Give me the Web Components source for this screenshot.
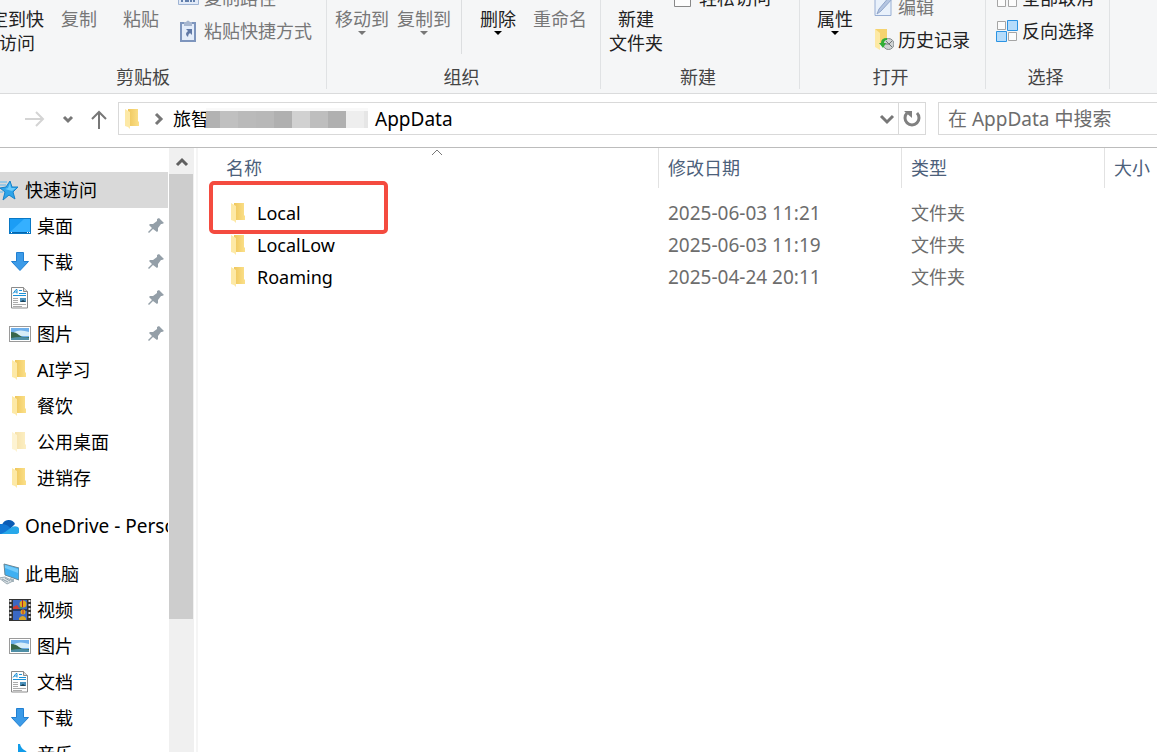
<!DOCTYPE html>
<html lang="zh-CN">
<head>
<meta charset="utf-8">
<meta name="viewport" content="width=device-width, initial-scale=1">
<title>AppData</title>
<style>
  html, body { margin: 0; height: 100%; overflow: hidden; background: #fff; }
  body { font: 18px/24px "Noto Sans", "Noto Sans CJK SC", sans-serif; color: #000; }
</style>
</head>
<body>
<explorer-window></explorer-window>

<script>
const ICONS = {
  folder: `<linearGradient id="g"><stop offset="0" stop-color="#efc75c"/><stop offset="1" stop-color="#fbe08a"/></linearGradient><path d="M6 1h10v12l1 1v4H6z" fill="url(#g)"/><path d="M3 1l5 3v17l-2-2-3-1z" fill="#fde9a6"/>`,
  star: `<path d="M13 2l2 6 6 0-5 5 2 7-6-4-6 5 2-8-5-4 6-1z" fill="#2ea5ea" stroke="#1581c9"/><path d="M13 4l1 5 5 0-4 3-7-2 3-1z" fill="#6ccbfa"/><path d="M3 3h7M3 6h6M3 13h3" stroke="#5db9ee"/>`,
  desktop: `<rect x=".5" y="3.500" width="21" height="15" fill="#1b9df5" stroke="#0a78c4"/><path d="M1 17L15 4h6v13z" fill="#35b0ff"/><path d="M1 17.500h20" stroke="#0565ad"/><path d="M2 17.500h1M18 17.500h1M20 17.500h1" stroke="#fff"/>`,
  download: `<path d="M7.500 1.500h7v9h5l-8.500 9-8.500-9h5z" fill="#3c9be8" stroke="#2180d2"/>`,
  doc: `<path d="M2.500.5h12l4 4v16.500h-16z" fill="#fdfdfd" stroke="#8b8b8b"/><path d="M14.500.5v4h4" fill="#ddd" stroke="#8b8b8b"/><path d="M4 6.500l3-4h1v4M5 5h3M10 3.500h3M10 6.500h7M4 8.500h13" stroke="#1a91d8" fill="none"/><path d="M4 11.500h5M4 13.500h5M4 15.500h5M4 17.500h13M4 19.500h9" stroke="#aaa"/><path d="M11 11h6v4h-6z" fill="#4c92bd"/><path d="M11 15l3-2 3 2z" fill="#1b4056"/>`,
  picture: `<rect x=".5" y="3.500" width="21" height="15" fill="#fff" stroke="#9a9a9a"/><path d="M2 5h18v12H2z" fill="#6fb0ec"/><path d="M5 9q6-3 15 0v4H5z" fill="#d7edf8"/><path d="M2 9q5 0 8 3t10 2v1H2z" fill="#38664a"/><path d="M2 15q9-2 18 0v2H2z" fill="#4f8fa6"/>`,
  cloud: `<path d="M5 10a7 7 0 0 1 13-1l-6 6z" fill="#0a5bb5"/><path d="M3 19a5 5 0 0 1 1-10q6-1 11 6l-6 4z" fill="#1277d4"/><path d="M4 19l4-2 7-5a6 6 0 0 1 6 0q4 5-1 7z" fill="#28a8ea"/>`,
  computer: `<path d="M7 1l15 4v12L8 12z" fill="#3fb0f2" stroke="#6a8794"/><path d="M8 2l13 4v4L8 5z" fill="#72cbfb"/><path d="M13 15l4 1v3h-5z" fill="#a8b8c0"/><path d="M2 15l6-1 8 4-6 3z" fill="#dce3e7" stroke="#9cabb3"/><path d="M5 16l6 3M8 15l5 3" stroke="#8fa0aa"/>`,
  video: `<path d="M0 0h22v22H0z" fill="#333"/><path d="M4 1h14v20H4z" fill="#3a68c4"/><path d="M4 11h14" stroke="#111"/><path d="M1.500 1v20M20.500 1v20" stroke="#ddd" stroke-width="2" stroke-dasharray="2 2"/><circle cx="14" cy="5" r="3.500" fill="#e0a91d"/><path d="M13.500 1v7" stroke="#b5222b"/><path d="M4 8l4-2 3 4H4z" fill="#ce3c35"/><path d="M9 8h5l-2 2z" fill="#44984d"/><circle cx="14" cy="13" r="2.500" fill="#dea51d"/><path d="M14 11v4" stroke="#c12c2c"/><path d="M10 19q4-4 7 0v2h-7z" fill="#d7a62a"/>`,
  music: `<path d="M11 1q1 5 6 7 2 3 0 7-1-4-5-4v6q0 4-5 4-4-1-2-4 2-2 4-1V1z" fill="#119ce9"/>`,
  pin: `<path d="M14 3l5 5-2 1-1 0-3 4 0 3-1 1-4-3-4 4-1-1 4-4-3-3 1-1h3l4-3 0-2z" fill="#949fa8"/>`,
  path: `<path d="M.5 3.500h20v14H.5z" fill="#e2eaf7" stroke="#9fb4d4"/><path d="M4 10v5M8 11v4M10 10v5M13 10v5M16 10v5" stroke="#617fac" stroke-width="2"/>`,
  paste: `<path d="M3 3h14v18H3z" fill="#e4edfa" stroke="#7d95bd" stroke-width="2"/><path d="M6 2h2q2-3 4 0h2v4H6z" fill="#a6b6cf"/><path d="M8 9h6v6l-2-2q-2 1-2 4-4-3 0-6z" fill="#6079a6"/>`,
  access: `<path d="M1.500 2.500h16v17h-16z" fill="#fdfdfd" stroke="#888"/>`,
  edit: `<path d="M3 2.500h16v17H3z" fill="#e9f1fb" stroke="#98aed3"/><path d="M21 2L9 15l-4 3 2-5L18 0z" fill="#b4c5e1" stroke="#91a6ca"/>`,
  history: `<path d="M3 0h12v15H8z" fill="#f5d36f"/><path d="M3 0l5 4v17l-5-3z" fill="#fde9a4"/><circle cx="16.500" cy="15" r="5.500" fill="#cfd3d4" stroke="#858b8d"/><path d="M13 15h4l3-3M14 12l6 6" stroke="#6f7577" fill="none"/><path d="M15 9q-6 0-6 5H7l4 5 3-5h-2q0-3 3-3z" fill="#2fae36"/>`,
  all: `<path d="M1.500 2.500h8v8h-8zM12.500 2.500h8v8h-8zM1.500 12.500h8v7h-8zM12.500 12.500h8v7h-8z" fill="#fcfcfc" stroke="#a5a5a5"/>`,
  invert: `<path d="M1.500 1.500h8v8h-8zM12.500 12.500h8v8h-8z" fill="#fcfcfc" stroke="#a5a5a5"/><path d="M11.500.5h10v10h-10zM.5 11.500h10v10H.5z" fill="#b5dcfb" stroke="#2b93e3"/>`,
  forward: `<path d="M1 11h18M12 4l7 7-7 7" fill="none" stroke="#d4d4d4" stroke-width="2"/>`,
  up: `<path d="M11 21V4M4 11l7-7 7 7" fill="none" stroke="#777" stroke-width="2"/>`,
  recent: `<path d="M7 9l4 4 4-4" fill="none" stroke="#777" stroke-width="3"/>`,
  crumb: `<path d="M9 6l5 5-5 5" fill="none" stroke="#777" stroke-width="3"/>`,
  drop: `<path d="M5 8l6 6 6-6" fill="none" stroke="#777" stroke-width="3"/>`,
  refresh: `<path d="M6 5A7 7 0 1 0 16 5" fill="none" stroke="#808080" stroke-width="3"/><path d="M3 3h8v7z" fill="#808080"/>`,
  scrollup: `<path d="M6 14l5-5 5 5" fill="none" stroke="#606060" stroke-width="3"/>`,
  sort: `<path d="M6 7l5-5 5 5" fill="none" stroke="#777"/>`
};

function define(name, html, setup) {
  const tpl = document.createElement('template');
  tpl.innerHTML = html;
  customElements.define(name, class extends HTMLElement {
    constructor() {
      super();
      this.attachShadow({ mode: 'open' }).append(tpl.content.cloneNode(true));
    }
    connectedCallback() { if (setup) setup(this, this.shadowRoot); }
  });
}

define('app-icon', `<style>
  :host { display: block; flex: none; width: 22px; height: 22px; }
  svg { display: block; }
</style>`, (el, root) => {
  if (root.querySelector('svg')) return;
  const t = document.createElement('template');
  t.innerHTML = `<svg width="22" height="22" viewBox="0 0 22 22" aria-hidden="true">${ICONS[el.getAttribute('name')]}</svg>`;
  root.append(t.content);
});

/* Tall ribbon command: one or two lines of label, optionally a menu arrow. */
define('ribbon-button', `<style>
  :host { display: block; flex: none; width: 62px; color: #222; }
  :host([wide]) { width: 80px; }
  :host([disabled]) { color: #777; }
  button { all: unset; display: flex; flex-direction: column; justify-content: flex-start; width: 100%; height: 48px; padding-bottom: 10px; text-align: center; white-space: nowrap; color: inherit; }
  i { display: none; width: 0; margin: 0 auto; border: 4px solid transparent; border-top-color: currentColor; border-bottom: 0; }
  :host([menu]) i { display: block; }
  :host([menu]:not([disabled])) i { border-top-color: #000; }
</style><button type="button"><span><slot></slot></span><i></i></button>`);

define('ribbon-item', `<style>
  :host { display: block; color: #222; }
  :host([disabled]) { color: #777; }
  button { all: unset; display: flex; align-items: center; gap: 4px; height: 33px; white-space: nowrap; color: inherit; }
</style><button type="button"><slot name="icon"></slot><slot></slot></button>`);

define('ribbon-group', `<style>
  :host { display: flex; flex-direction: column; flex: none; box-sizing: border-box; border-right: 1px solid #e0e2e4; }
  .body { display: flex; align-items: flex-end; height: 65px; padding-left: 4px; }
  :host([lead]) .body { padding-left: 8px; }
  .label { padding-right: 4px; text-align: center; color: #444; }
  :host([lead]) .label { padding-right: 0; }
</style><div class="body"><slot></slot></div><div class="label"><slot name="label"></slot></div>`);

define('ribbon-bar', `<style>
  :host { display: flex; overflow: hidden; background: #f5f6f7; border-bottom: 1px solid #dadbdc; padding-bottom: 4px; }
  .clipboard { width: 367px; margin-left: -40px; }
  .organize { width: 274px; }
  .new { width: 199px; }
  .open { width: 186px; }
  .select { width: 124px; }
  .stack { display: flex; flex-direction: column; margin-left: 6px; padding-bottom: 18px; }
  .stack.low { padding-bottom: 9px; }
  .rule { align-self: stretch; width: 1px; margin: 0 5px 11px 6px; background: #dcdee0; }
</style>
<ribbon-group class="clipboard" lead>
  <ribbon-button wide>固定到快<br>速访问</ribbon-button>
  <ribbon-button disabled>复制</ribbon-button>
  <ribbon-button disabled>粘贴</ribbon-button>
  <div class="stack">
    <ribbon-item disabled><app-icon slot="icon" name="path"></app-icon>复制路径</ribbon-item>
    <ribbon-item disabled><app-icon slot="icon" name="paste"></app-icon>粘贴快捷方式</ribbon-item>
  </div>
  <span slot="label">剪贴板</span>
</ribbon-group>
<ribbon-group class="organize">
  <ribbon-button disabled menu>移动到</ribbon-button>
  <ribbon-button disabled menu>复制到</ribbon-button>
  <div class="rule"></div>
  <ribbon-button menu>删除</ribbon-button>
  <ribbon-button disabled>重命名</ribbon-button>
  <span slot="label">组织</span>
</ribbon-group>
<ribbon-group class="new">
  <ribbon-button>新建<br>文件夹</ribbon-button>
  <div class="stack">
    <ribbon-item><app-icon slot="icon" name="access"></app-icon>轻松访问</ribbon-item>
    <ribbon-item></ribbon-item>
  </div>
  <span slot="label">新建</span>
</ribbon-group>
<ribbon-group class="open">
  <ribbon-button menu>属性</ribbon-button>
  <div class="stack low">
    <ribbon-item disabled><app-icon slot="icon" name="edit"></app-icon>编辑</ribbon-item>
    <ribbon-item><app-icon slot="icon" name="history"></app-icon>历史记录</ribbon-item>
  </div>
  <span slot="label">打开</span>
</ribbon-group>
<ribbon-group class="select">
  <div class="stack">
    <ribbon-item><app-icon slot="icon" name="all"></app-icon>全部取消</ribbon-item>
    <ribbon-item><app-icon slot="icon" name="invert"></app-icon>反向选择</ribbon-item>
  </div>
  <span slot="label">选择</span>
</ribbon-group>`);

define('address-bar', `<style>
  :host { display: flex; padding: 8px 0 12px 24px; border-bottom: 1px solid #bcbcbc; }
  button { all: unset; display: flex; align-items: center; justify-content: center; flex: none; }
  .nav { display: flex; align-items: center; gap: 11px; margin-right: 8px; }
  .nav button:last-child { margin-left: -2px; }
  .path { display: flex; align-items: center; flex: 1; min-width: 0; height: 31px; padding-left: 3px; border: 1px solid #d9d9d9; white-space: nowrap; }
  .crumb { margin: 0 4px 0 3px; }
  .mask { display: flex; margin: 0 7px 0 -3px; height: 17px; border-top: 3px solid #f9f9f9; padding-bottom: 1px; z-index: 1; }
  .mask i { width: 18px; background: var(--c); }
  .mask i:first-child { width: 14px; }
  .mask i:last-child { width: 4px; }
  .latin { font-size: 19px; flex: 1; }
  .refresh { align-self: stretch; width: 26px; border-left: 1px solid #d9d9d9; }
  input { box-sizing: border-box; flex: none; width: 219px; height: 33px; margin-left: 12px; padding: 0 9px; border: 1px solid #d9d9d9; border-right: 0; background: #fff; font: inherit; font-size: 19px; outline: 0; }
  input::placeholder { color: #6d6d6d; opacity: 1; }
</style>
<div class="nav">
  <button type="button" aria-label="前进"><app-icon name="forward"></app-icon></button>
  <button type="button" aria-label="最近浏览的位置"><app-icon name="recent"></app-icon></button>
  <button type="button" aria-label="向上"><app-icon name="up"></app-icon></button>
</div>
<div class="path">
  <app-icon name="folder"></app-icon>
  <app-icon class="crumb" name="crumb"></app-icon>
  <span>旅智</span>
  <span class="mask"><i style="--c:#b2b2b2"></i><i style="--c:#c0c0c0"></i><i style="--c:#bababa"></i><i style="--c:#b8b8b8"></i><i style="--c:#b0b0b0"></i><i style="--c:#d1d1d1"></i><i style="--c:#bebebe"></i><i style="--c:#b0b0b0"></i><i style="--c:#eee"></i><i style="--c:#e6e6e6"></i></span>
  <span class="latin">AppData</span>
  <button type="button" aria-label="以前的位置"><app-icon name="drop"></app-icon></button>
  <button type="button" class="refresh" aria-label="刷新"><app-icon name="refresh"></app-icon></button>
</div>
<input type="search" aria-label="搜索" placeholder="在 AppData 中搜索">`);

define('nav-item', `<style>
  :host { display: block; margin-left: -3px; }
  :host([child]) { margin-left: 9px; }
  :host([gap]) { margin-top: 12px; }
  :host([selected]) { background: #d9d9d9; }
  :host([latin]) { font-size: 19px; }
  :host([faded]) app-icon { opacity: .5; }
  a { display: flex; align-items: center; gap: 6px; height: 36px; padding-right: 1px; color: inherit; text-decoration: none; white-space: nowrap; overflow: hidden; }
  .text { flex: 1; }
  .pin { display: none; }
  :host([pinned]) .pin { display: block; }
</style><a href="#"><app-icon></app-icon><span class="text"><slot></slot></span><app-icon class="pin" name="pin"></app-icon></a>`,
(el, root) => {
  const old = root.querySelector('app-icon');
  const icon = document.createElement('app-icon');
  icon.setAttribute('name', el.getAttribute('icon'));
  old.replaceWith(icon);
});

define('nav-tree', `<style>
  :host { display: block; box-sizing: border-box; width: 168px; padding-top: 24px; overflow: hidden; }
</style>
<nav>
  <nav-item icon="star" selected>快速访问</nav-item>
  <nav-item icon="desktop" child pinned>桌面</nav-item>
  <nav-item icon="download" child pinned>下载</nav-item>
  <nav-item icon="doc" child pinned>文档</nav-item>
  <nav-item icon="picture" child pinned>图片</nav-item>
  <nav-item icon="folder" child>AI学习</nav-item>
  <nav-item icon="folder" child>餐饮</nav-item>
  <nav-item icon="folder" child faded>公用桌面</nav-item>
  <nav-item icon="folder" child>进销存</nav-item>
  <nav-item icon="cloud" gap latin>OneDrive - Personal</nav-item>
  <nav-item icon="computer" gap>此电脑</nav-item>
  <nav-item icon="video" child>视频</nav-item>
  <nav-item icon="picture" child>图片</nav-item>
  <nav-item icon="doc" child>文档</nav-item>
  <nav-item icon="download" child>下载</nav-item>
  <nav-item icon="music" child>音乐</nav-item>
</nav>`);

define('scroll-bar', `<style>
  :host { display: flex; flex-direction: column; width: 25px; margin-left: 1px; background: #f0f0f0; }
  button { all: unset; display: flex; align-items: center; justify-content: center; height: 26px; padding-top: 2px; box-sizing: border-box; }
  .track { flex: 1; }
  .thumb { width: 24px; height: 77%; background: #cdcdcd; }
</style><button type="button" aria-label="向上滚动"><app-icon name="scrollup"></app-icon></button><div class="track"><div class="thumb"></div></div>`);

define('file-list', `<style>
  :host { display: block; flex: 1; min-width: 0; margin-left: 2px; border-left: 2px solid #f5f5f5; }
  table { width: 100%; border-collapse: separate; border-spacing: 0; table-layout: fixed; }
  th { position: relative; height: 40px; padding: 0 0 0 9px; box-sizing: border-box; text-align: left; font-weight: normal; color: #4c607a; border-left: 1px solid #e2e2e2; white-space: nowrap; }
  th:first-child { border: 0; padding-left: 28px; }
  .date { width: 243px; }
  .type { width: 203px; }
  .size { width: 53px; }
  .sort { position: absolute; top: 0; left: calc(50% - 2px); }
  tbody::before { content: ""; display: block; height: 9px; }
  td { position: relative; height: 32px; padding: 0 0 0 10px; color: #6d6d6d; white-space: nowrap; }
  td:first-child { padding-left: 30px; color: #000; }
  .when { font-size: 19px; }
  .name { display: flex; align-items: center; gap: 7px; }
  .marker { position: absolute; left: 11px; top: -16px; width: 171px; height: 45px; border: 4px solid #f44b3f; border-radius: 5px; pointer-events: none; }
</style>
<table>
  <thead><tr>
    <th>名称<app-icon class="sort" name="sort"></app-icon></th>
    <th class="date">修改日期</th><th class="type">类型</th><th class="size">大小</th>
  </tr></thead>
  <tbody>
    <tr><td><span class="name"><app-icon name="folder"></app-icon>Local</span><span class="marker"></span></td><td class="when">2025-06-03 11:21</td><td>文件夹</td><td></td></tr>
    <tr><td><span class="name"><app-icon name="folder"></app-icon>LocalLow</span></td><td class="when">2025-06-03 11:19</td><td>文件夹</td><td></td></tr>
    <tr><td><span class="name"><app-icon name="folder"></app-icon>Roaming</span></td><td class="when">2025-04-24 20:11</td><td>文件夹</td><td></td></tr>
  </tbody>
</table>`);

define('explorer-window', `<style>
  :host { display: flex; flex-direction: column; height: 100vh; overflow: hidden; }
  main { display: flex; flex: 1; min-height: 0; }
</style>
<ribbon-bar></ribbon-bar>
<address-bar></address-bar>
<main><nav-tree></nav-tree><scroll-bar></scroll-bar><file-list></file-list></main>`);
</script>
</body>
</html>
